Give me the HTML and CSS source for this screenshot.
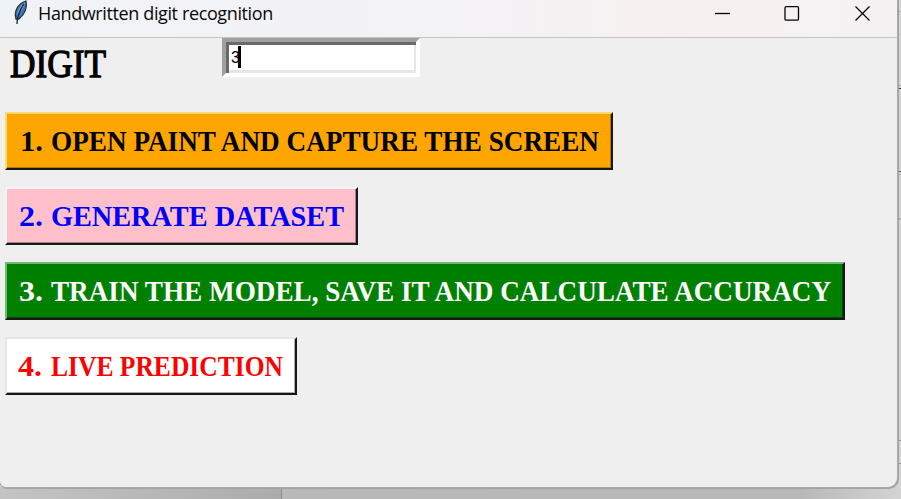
FILE: index.html
```
<!DOCTYPE html>
<html lang="en">
<head>
<meta charset="utf-8">
<title>Handwritten digit recognition</title>
<link rel="stylesheet" href="styles.css">
</head>
<body>
<div class="desktop">
  <main class="window">
    <header class="titlebar">
      <svg class="feather" width="16" height="26" viewBox="0 0 16 26">
        <path d="M3 19C1 12 4 4 13 1c1 5 0 12-7 18z" fill="#3976b8" stroke="#26313d" stroke-width="1.3"/>
        <path d="M4 15C5 9 8 5 12 2c0 4-3 9-7 12" fill="#79b2ea"/>
        <path d="M4 24C4 17 6 11 11 4" fill="none" stroke="#202830" stroke-width="1.3"/>
      </svg>
      <h1>Handwritten digit recognition</h1>
      <svg class="controls" width="160" height="28" viewBox="0 0 160 28" fill="none" stroke="#050505" stroke-width="1.3">
        <path d="M0 13.5h15"/>
        <rect x="70" y="6.7" width="13.5" height="13.5" rx="1.2"/>
        <path d="M140.5 6.5l14 14M154.5 6.5l-14 14"/>
      </svg>
    </header>
    <section class="content">
      <div class="entry-row">
        <svg class="label" width="222" height="50"><text x="10" y="39" textLength="96" lengthAdjust="spacingAndGlyphs">DIGIT</text></svg>
        <div class="entry"><span>3</span><i class="caret"></i></div>
      </div>
      <div class="actions">
        <button class="action capture"><svg width="604" height="54"><text x="13" y="37" textLength="23" lengthAdjust="spacingAndGlyphs">1. </text><text x="44" y="37" textLength="548" lengthAdjust="spacingAndGlyphs">OPEN PAINT AND CAPTURE THE SCREEN</text></svg></button>
        <button class="action dataset"><svg width="349" height="54"><text x="12" y="37" textLength="24" lengthAdjust="spacingAndGlyphs">2. </text><text x="44" y="37" textLength="293" lengthAdjust="spacingAndGlyphs">GENERATE DATASET</text></svg></button>
        <button class="action train"><svg width="836" height="54"><text x="12" y="37" textLength="24" lengthAdjust="spacingAndGlyphs">3. </text><text x="44" y="37" textLength="780" lengthAdjust="spacingAndGlyphs">TRAIN THE MODEL, SAVE IT AND CALCULATE ACCURACY</text></svg></button>
        <button class="action predict"><svg width="288" height="54"><text x="11" y="37" textLength="24" lengthAdjust="spacingAndGlyphs">4. </text><text x="44" y="37" textLength="232" lengthAdjust="spacingAndGlyphs">LIVE PREDICTION</text></svg></button>
      </div>
    </section>
  </main>
</div>
</body>
</html>
```
FILE: styles.css
```
* { box-sizing: border-box; }
body { margin: 0; }
svg { display: block; overflow: visible; }
.desktop {
  width: 901px;
  height: 499px;
  overflow: hidden;
  background:
    linear-gradient(#444, #444) 897px 88px / 4px 1px no-repeat,
    linear-gradient(#aaa, #aaa) 897px 85px / 4px 1px no-repeat,
    linear-gradient(#aaa, #aaa) 897px 11px / 4px 1px no-repeat,
    linear-gradient(#555, #555) 897px 171px / 4px 1px no-repeat,
    linear-gradient(#aaa, #aaa) 897px 174px / 4px 1px no-repeat,
    linear-gradient(#b0b0b0, #b0b0b0) 897px 218px / 4px 2px no-repeat,
    linear-gradient(#999, #999) 897px 440px / 4px 1px no-repeat,
    linear-gradient(#999, #999) 897px 463px / 4px 1px no-repeat,
    linear-gradient(#8d8d8d, #8d8d8d) 281px 487px / 1px 12px no-repeat,
    linear-gradient(90deg, #c4c4c4, #acacac 281px, #b9b9b9 282px, #b8b8b8 800px, #d4d4d4 901px) 0 487px / 901px 12px no-repeat,
    #d4d4d4;
}
.window {
  width: 897px;
  height: 487px;
  background: #efefef;
  border-radius: 0 0 9px 6px;
  box-shadow: 0 0 0 1px #aaa, 1px 1px 0 1px #a4a4a4;
  overflow: hidden;
}
.titlebar {
  height: 38px;
  padding-left: 13px;
  display: flex;
  align-items: flex-start;
  border-bottom: 1px solid #c3c3c5;
  background: linear-gradient(90deg, #f0f3f6, #f3f2f6 50%, #f7f0f0 75%, #f5f1f3);
}
h1 {
  margin: 0 0 0 9px;
  font: 400 18px/27px "Open Sans", "Noto Sans", sans-serif;
  letter-spacing: -.38px;
  color: #080808;
  white-space: nowrap;
}
.controls { margin-left: auto; margin-right: 22px; }
.entry-row { display: flex; height: 74px; align-items: flex-start; }
text { font-family: "Liberation Serif", serif; font-weight: 700; font-size: 29px; fill: currentColor; }
.label { color: #000; }
.label text { font-size: 41px; font-weight: 400; stroke: #000; stroke-width: 1.3px; }
.entry {
  width: 198px;
  height: 39px;
  border: 4px solid;
  border-color: #a0a0a0 #fff #fff #a0a0a0;
  background: #fff;
  box-shadow: inset 3px 3px #696969, inset -2px -3px #e5e5e5;
  padding: 3px 0 0 5px;
  display: flex;
  font: 16px/25px "Liberation Sans", sans-serif;
}
.entry span { width: 7px; }
.caret { width: 3px; height: 22px; margin-top: 1px; background: #000; }
.actions { display: flex; flex-direction: column; align-items: flex-start; gap: 17px; padding-left: 5px; }
.action { height: 58px; padding: 0; border: 2px solid; border-right-color: #171717; border-bottom-color: #171717; }
.capture { color: #000; background: #ffa500; border-top-color: #ffdb70; border-left-color: #ffdb70; box-shadow: inset -1px -1px #b87700; }
.dataset { color: #00f; background: #ffc0cb; border-top-color: #fff5f7; border-left-color: #fff5f7; box-shadow: inset -1px -1px #a77d84; }
.train { color: #fff; background: #008000; border-top-color: #72b872; border-left-color: #72b872; box-shadow: inset -1px -1px #004c00; }
.predict { color: #f00; background: #fff; border-top-color: #e7e7e7; border-left-color: #e7e7e7; box-shadow: inset -1px -1px #aaa; }
```
